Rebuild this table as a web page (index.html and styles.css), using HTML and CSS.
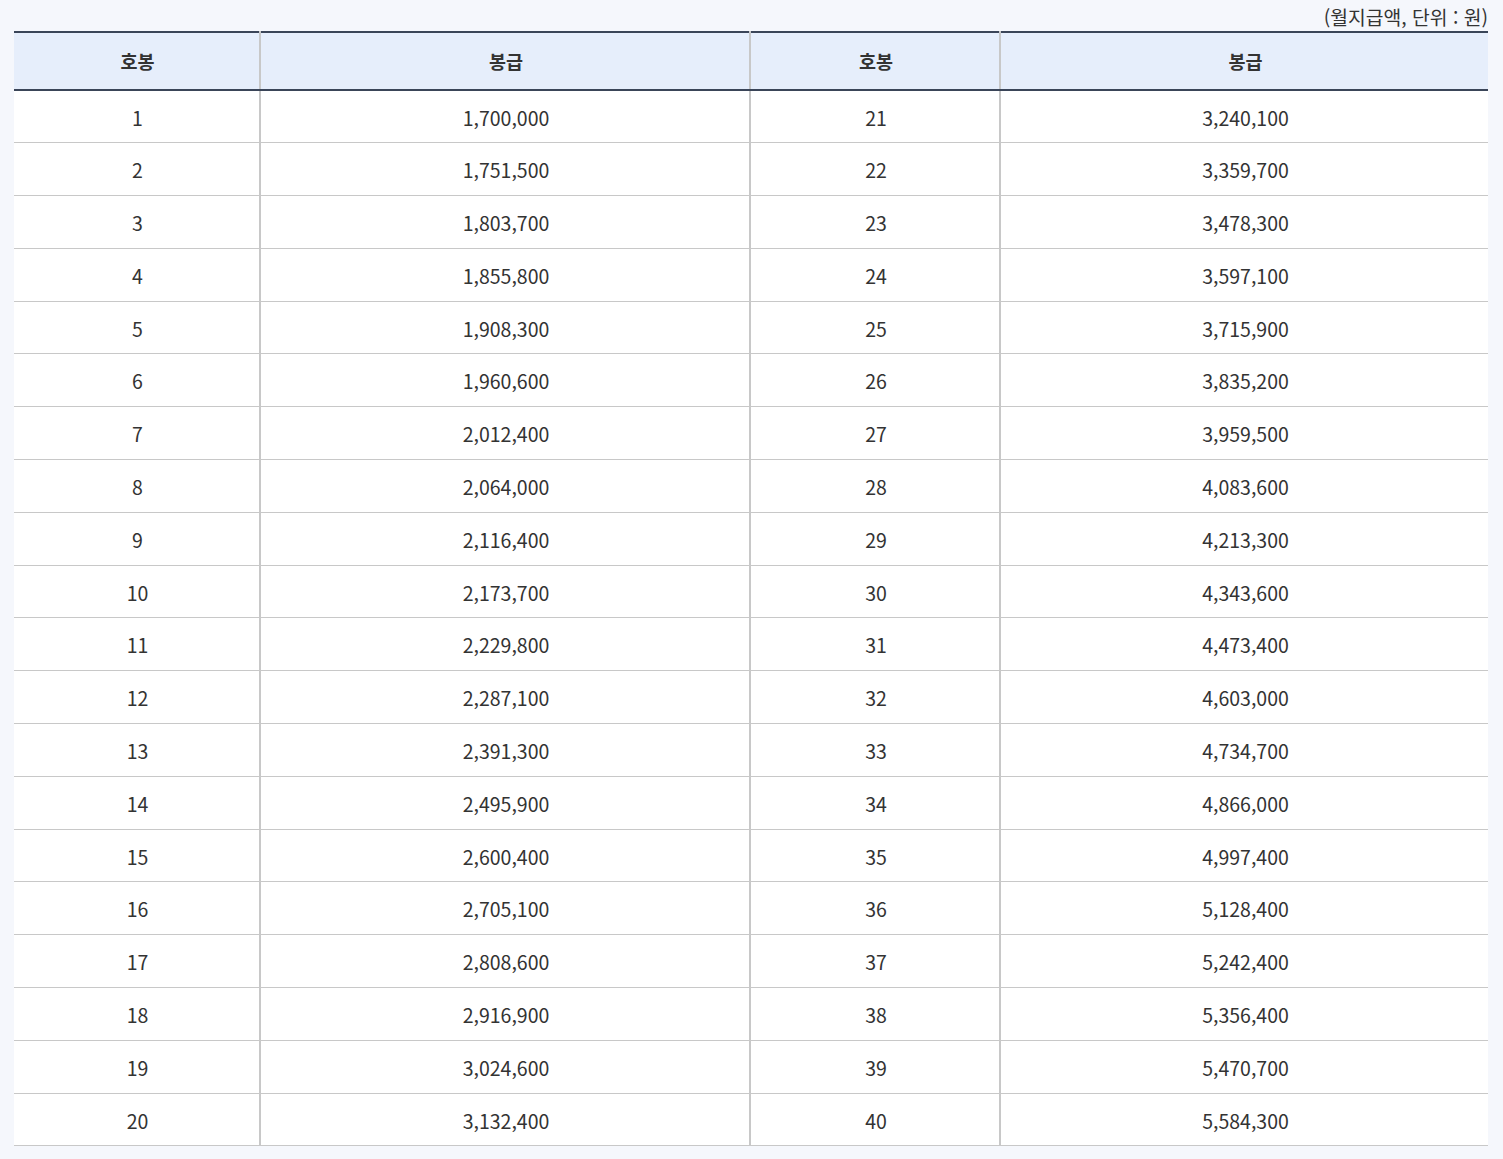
FILE: index.html
```html
<!DOCTYPE html>
<html lang="ko">
<head>
<meta charset="utf-8">
<title>봉급표</title>
<link rel="stylesheet" href="styles.css">
</head>
<body>
<div class="wrap">
  <p class="unit">(월지급액, 단위 : 원)</p>
  <table class="pay">
    <colgroup>
      <col class="c-1"><col class="c-2"><col class="c-3"><col class="c-4">
    </colgroup>
    <thead>
      <tr><th>호봉</th><th>봉급</th><th>호봉</th><th>봉급</th></tr>
    </thead>
    <tbody>
      <tr><td>1</td><td>1,700,000</td><td>21</td><td>3,240,100</td></tr>
      <tr><td>2</td><td>1,751,500</td><td>22</td><td>3,359,700</td></tr>
      <tr><td>3</td><td>1,803,700</td><td>23</td><td>3,478,300</td></tr>
      <tr><td>4</td><td>1,855,800</td><td>24</td><td>3,597,100</td></tr>
      <tr><td>5</td><td>1,908,300</td><td>25</td><td>3,715,900</td></tr>
      <tr><td>6</td><td>1,960,600</td><td>26</td><td>3,835,200</td></tr>
      <tr><td>7</td><td>2,012,400</td><td>27</td><td>3,959,500</td></tr>
      <tr><td>8</td><td>2,064,000</td><td>28</td><td>4,083,600</td></tr>
      <tr><td>9</td><td>2,116,400</td><td>29</td><td>4,213,300</td></tr>
      <tr><td>10</td><td>2,173,700</td><td>30</td><td>4,343,600</td></tr>
      <tr><td>11</td><td>2,229,800</td><td>31</td><td>4,473,400</td></tr>
      <tr><td>12</td><td>2,287,100</td><td>32</td><td>4,603,000</td></tr>
      <tr><td>13</td><td>2,391,300</td><td>33</td><td>4,734,700</td></tr>
      <tr><td>14</td><td>2,495,900</td><td>34</td><td>4,866,000</td></tr>
      <tr><td>15</td><td>2,600,400</td><td>35</td><td>4,997,400</td></tr>
      <tr><td>16</td><td>2,705,100</td><td>36</td><td>5,128,400</td></tr>
      <tr><td>17</td><td>2,808,600</td><td>37</td><td>5,242,400</td></tr>
      <tr><td>18</td><td>2,916,900</td><td>38</td><td>5,356,400</td></tr>
      <tr><td>19</td><td>3,024,600</td><td>39</td><td>5,470,700</td></tr>
      <tr><td>20</td><td>3,132,400</td><td>40</td><td>5,584,300</td></tr>
    </tbody>
  </table>
</div>
</body>
</html>
```
FILE: styles.css
```css
html, body {
  margin: 0;
  padding: 0;
  background: #f5f7fc;
}
body {
  font-family: "Noto Sans CJK KR", "Noto Sans", sans-serif;
  color: #333;
}
.wrap {
  padding: 0 15px 0 14px;
}
.unit {
  margin: 0;
  height: 31px;
  line-height: 34px;
  text-align: right;
  font-size: 19.3px;
  color: #333;
}
.pay {
  width: 100%;
  border-collapse: collapse;
  table-layout: fixed;
  background: #fff;
  border-top: 2px solid #3a4558;
  border-bottom: 1px solid #c8c8c8;
}
.c-1 { width: 246px; }
.c-2 { width: 490px; }
.c-3 { width: 250px; }
.c-4 { width: auto; }
.pay th {
  height: 56px;
  padding: 0 0 0 2px;
  background: #e6eefb;
  font-size: 18.5px;
  font-weight: 700;
  color: #333;
  border-bottom: 2px solid #3a4558;
  border-left: 2px solid #c8c8c8;
  text-align: center;
}
.pay td {
  height: 52.8px;
  padding: 1px 0 0 2px;
  font-size: 19.5px;
  text-align: center;
  color: #333;
  border-top: 1px solid #c8c8c8;
  border-left: 2px solid #c8c8c8;
  box-sizing: border-box;
}
.pay th:first-child, .pay td:first-child { border-left: none; }
```
